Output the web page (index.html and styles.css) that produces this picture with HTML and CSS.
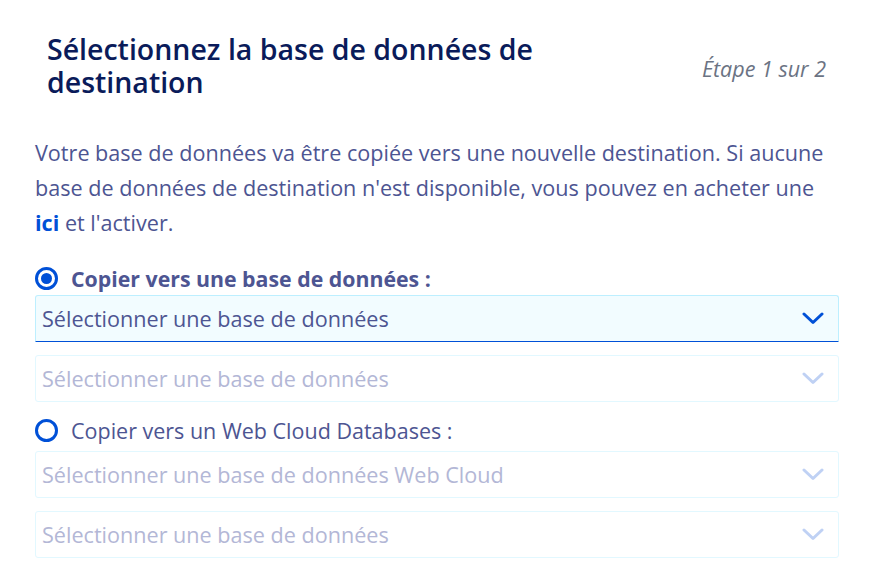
FILE: index.html
```html
<!DOCTYPE html>
<html lang="fr">
<head>
<meta charset="utf-8">
<link rel="stylesheet" href="styles.css">
</head>
<body>
<div class="wizard">
  <div class="header">
    <h2 class="title">Sélectionnez la base de données de destination</h2>
    <span class="step">Étape 1 sur 2</span>
  </div>
  <p class="intro">Votre base de données va être copiée vers une nouvelle destination. Si aucune base de données de destination n'est disponible, vous pouvez en acheter une <a class="link" href="#">ici</a> et l'activer.</p>

  <label class="radio radio-first checked">
    <span class="radio-icon"><span class="dot"></span></span>
    <span class="radio-label">Copier vers une base de données :</span>
  </label>
  <div class="select active">
    <span class="select-text">Sélectionner une base de données</span>
    <svg class="chevron" width="22" height="13" viewBox="0 0 22 13"><path d="M2 2 L11 10.5 L20 2" fill="none" stroke="currentColor" stroke-width="3" stroke-linecap="round" stroke-linejoin="round"/></svg>
  </div>
  <div class="select disabled">
    <span class="select-text">Sélectionner une base de données</span>
    <svg class="chevron" width="22" height="13" viewBox="0 0 22 13"><path d="M2 2 L11 10.5 L20 2" fill="none" stroke="currentColor" stroke-width="3" stroke-linecap="round" stroke-linejoin="round"/></svg>
  </div>

  <label class="radio radio-second">
    <span class="radio-icon"></span>
    <span class="radio-label">Copier vers un Web Cloud Databases :</span>
  </label>
  <div class="select disabled">
    <span class="select-text">Sélectionner une base de données Web Cloud</span>
    <svg class="chevron" width="22" height="13" viewBox="0 0 22 13"><path d="M2 2 L11 10.5 L20 2" fill="none" stroke="currentColor" stroke-width="3" stroke-linecap="round" stroke-linejoin="round"/></svg>
  </div>
  <div class="select disabled">
    <span class="select-text">Sélectionner une base de données</span>
    <svg class="chevron" width="22" height="13" viewBox="0 0 22 13"><path d="M2 2 L11 10.5 L20 2" fill="none" stroke="currentColor" stroke-width="3" stroke-linecap="round" stroke-linejoin="round"/></svg>
  </div>
</div>
</body>
</html>
```

FILE: styles.css
```css
html, body {
  margin: 0;
  padding: 0;
  background: #ffffff;
}
body {
  font-family: "Open Sans", "Noto Sans", sans-serif;
  color: #4d5592;
}
.wizard {
  width: 804px;
  padding: 33px 0 0 35px;
}
.header {
  display: flex;
  align-items: center;
  justify-content: space-between;
  padding: 0 13px 0 12px;
  height: 66px;
}
.title {
  margin: 0;
  width: 560px;
  font-size: 28.5px;
  line-height: 33px;
  font-weight: 600;
  color: #0a1b5a;
}
.step {
  font-size: 21.5px;
  font-style: italic;
  color: #6b7383;
  margin-top: 4px;
}
.intro {
  margin: 36px 0 0;
  font-size: 21.6px;
  line-height: 35px;
}
.link {
  color: #0050d7;
  font-weight: 700;
  text-decoration: none;
}
.radio {
  display: flex;
  align-items: center;
  gap: 13px;
  height: 30px;
  margin-bottom: 2px;
}
.radio-first {
  margin-top: 23px;
}
.radio-second {
  margin-top: 4px;
  margin-bottom: 6px;
}
.radio-icon {
  box-sizing: border-box;
  width: 23px;
  height: 23px;
  border: 3px solid #0050d7;
  border-radius: 50%;
  display: flex;
  align-items: center;
  justify-content: center;
}
.dot {
  width: 11px;
  height: 11px;
  border-radius: 50%;
  background: #0050d7;
}
.radio-label {
  font-size: 21.5px;
}
.radio.checked .radio-label {
  font-size: 21.3px;
  font-weight: 700;
}
.select {
  box-sizing: border-box;
  height: 47px;
  margin-bottom: 13px;
  border: 1px solid #e2f8ff;
  border-radius: 3px;
  display: flex;
  align-items: center;
  justify-content: space-between;
  padding: 0 14px 0 6px;
  font-size: 21.6px;
}
.select.active {
  background: #f2fcff;
  border-color: #bdefff;
  border-bottom: 1px solid #0050d7;
  border-radius: 3px 3px 0 0;
  color: #4d5592;
}
.select.active .chevron {
  color: #0050d7;
}
.select.disabled {
  background: #ffffff;
  color: #b3b7d6;
}
.select.disabled .chevron {
  color: #bfd1f4;
}
.chevron {
  display: block;
}
```
